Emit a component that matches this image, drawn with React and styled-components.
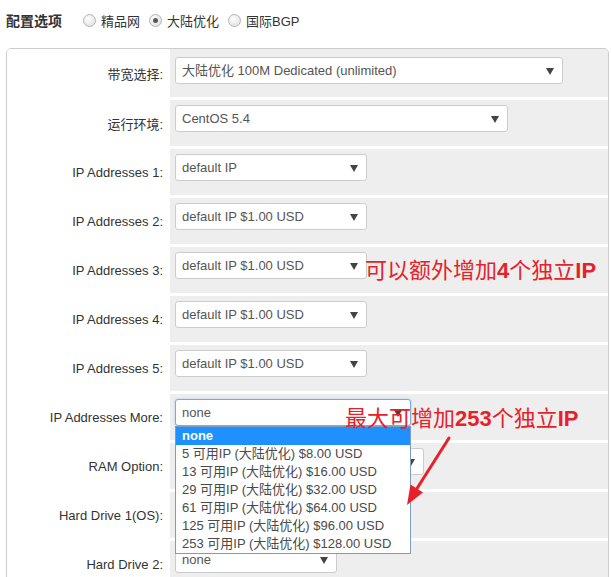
import React from "react";
import styled, { createGlobalStyle } from "styled-components";

const GlobalStyle = createGlobalStyle`
  html, body {
    margin: 0;
    padding: 0;
    background: #fff;
    overflow: hidden;
  }
  body {
    font-family: "Liberation Sans", "Noto Sans CJK SC", Arial, sans-serif;
    color: #333;
  }
`;

// RAM / Hard Drive 1 sit under the open list, so their values don't show
const rows = [
  { label: "带宽选择:", value: "大陆优化 100M Dedicated (unlimited)", width: 388 },
  { label: "运行环境:", value: "CentOS 5.4", width: 333 },
  { label: "IP Addresses 1:", value: "default IP", width: 192 },
  { label: "IP Addresses 2:", value: "default IP $1.00 USD", width: 192 },
  { label: "IP Addresses 3:", value: "default IP $1.00 USD", width: 192 },
  { label: "IP Addresses 4:", value: "default IP $1.00 USD", width: 192 },
  { label: "IP Addresses 5:", value: "default IP $1.00 USD", width: 192 },
  { label: "IP Addresses More:", value: "none", width: 236, open: true },
  { label: "RAM Option:", value: "", width: 249 },
  { label: "Hard Drive 1(OS):", value: "", width: 230 },
  { label: "Hard Drive 2:", value: "none", width: 162 },
];

const moreOptions = [
  "none",
  "5 可用IP (大陆优化) $8.00 USD",
  "13 可用IP (大陆优化) $16.00 USD",
  "29 可用IP (大陆优化) $32.00 USD",
  "61 可用IP (大陆优化) $64.00 USD",
  "125 可用IP (大陆优化) $96.00 USD",
  "253 可用IP (大陆优化) $128.00 USD",
];

const App = () => {
  return (
    <Page>
      <GlobalStyle />
      <Header>
        <Title>配置选项</Title>
        <RadioItem>
          <Radio />
          精品网
        </RadioItem>
        <RadioItem>
          <Radio checked />
          大陆优化
        </RadioItem>
        <RadioItem>
          <Radio />
          国际BGP
        </RadioItem>
      </Header>

      <Panel>
        {rows.map((row, i) => (
          <Row key={row.label}>
            <Label first={i === 0}>{row.label}</Label>
            <Field first={i === 0}>
              <SelectBox width={row.width} focused={row.open}>
                {row.value}
                <Caret />
                {row.open && (
                  <OptionList>
                    {moreOptions.map((opt, j) => (
                      <Option key={opt} active={j === 0}>
                        {opt}
                      </Option>
                    ))}
                  </OptionList>
                )}
              </SelectBox>
            </Field>
          </Row>
        ))}
      </Panel>

      {/* red notes drawn over the form */}
      <Note top={255} left={365}>
        可以额外增加<b>4</b>个独立<b>IP</b>
      </Note>
      <Note top={403} left={345}>
        最大可增加<b>253</b>个独立<b>IP</b>
      </Note>
      <Arrow width="611" height="577" viewBox="0 0 611 577">
        <line x1="449" y1="438" x2="416" y2="490" stroke="#e62129" strokeWidth="3" strokeLinecap="round" />
        <polygon points="407,505 410.5,484.5 423,492.5" fill="#e62129" />
      </Arrow>
    </Page>
  );
};

const Page = styled.div`
  position: relative;
  width: 611px;
  height: 577px;
  padding-left: 6px;
  box-sizing: border-box;
  overflow: hidden;
`;

const Header = styled.div`
  display: flex;
  align-items: center;
  height: 40px;
  margin-bottom: 8px;
  font-size: 13px;
`;

const Title = styled.span`
  font-size: 14px;
  font-weight: bold;
  color: #333;
  margin-right: 21px;
`;

const RadioItem = styled.label`
  display: flex;
  align-items: center;
  gap: 5px;
  margin-right: 9px;
  color: #333;
`;

const Radio = styled.span`
  position: relative;
  width: 13px;
  height: 13px;
  box-sizing: border-box;
  border-radius: 50%;
  border: 1px solid #b4b4b4;
  background: radial-gradient(circle at 40% 35%, #fdfdfd, #dcdcdc);

  &::after {
    content: "";
    display: ${(p) => (p.checked ? "block" : "none")};
    position: absolute;
    top: 3px;
    left: 3px;
    width: 5px;
    height: 5px;
    border-radius: 50%;
    background: #5a5a5a;
  }
`;

const Panel = styled.div`
  width: 603px;
  box-sizing: border-box;
  border: 1px solid #ccc;
  border-radius: 5px;
  overflow: hidden;
`;

const Row = styled.div`
  display: grid;
  grid-template-columns: 163px 1fr;
`;

const Label = styled.div`
  display: flex;
  align-items: center;
  justify-content: flex-end;
  padding-right: 7px;
  padding-top: ${(p) => (p.first ? "0" : "3px")};
  font-size: 13px;
  color: #333;
  background: #fff;
`;

const Field = styled.div`
  box-sizing: border-box;
  height: ${(p) => (p.first ? "48px" : "49px")};
  padding: ${(p) => (p.first ? "8px" : "5px")} 0 0 5px;
  border-top: ${(p) => (p.first ? "none" : "3px solid #fff")};
  background: #eee;
`;

const SelectBox = styled.div`
  position: relative;
  width: ${(p) => p.width}px;
  height: 27px;
  box-sizing: border-box;
  padding-left: 6px;
  line-height: 25px;
  font-size: 13px;
  color: #555;
  background: #fff;
  border: 1px solid ${(p) => (p.focused ? "#7ea8e0" : "#ccc")};
  border-radius: 3px;
  box-shadow: ${(p) => (p.focused ? "0 0 2px rgba(102, 160, 233, 0.6)" : "none")};
  white-space: nowrap;
`;

const Caret = styled.span`
  position: absolute;
  right: 8px;
  top: 10px;
  width: 0;
  height: 0;
  border-left: 4px solid transparent;
  border-right: 4px solid transparent;
  border-top: 7px solid #444;
`;

const OptionList = styled.div`
  position: absolute;
  z-index: 5;
  top: 26px;
  left: -1px;
  width: 236px;
  box-sizing: border-box;
  border: 1px solid #7f9db9;
  background: #fff;
`;

const Option = styled.div`
  height: 18px;
  line-height: 18px;
  padding-left: 6px;
  font-size: 13px;
  color: ${(p) => (p.active ? "#fff" : "#4a4a4a")};
  font-weight: ${(p) => (p.active ? "bold" : "normal")};
  background: ${(p) => (p.active ? "#1e90ff" : "#fff")};
`;

const Note = styled.div`
  position: absolute;
  z-index: 6;
  top: ${(p) => p.top}px;
  left: ${(p) => p.left}px;
  font-family: "Noto Sans CJK SC", sans-serif;
  font-size: 22px;
  line-height: 26px;
  color: #e62129;
  white-space: nowrap;

  b {
    font-family: "Liberation Sans", Arial, sans-serif;
    font-weight: bold;
  }
`;

const Arrow = styled.svg`
  position: absolute;
  z-index: 6;
  top: 0;
  left: 0;
  pointer-events: none;
`;

export default App;
